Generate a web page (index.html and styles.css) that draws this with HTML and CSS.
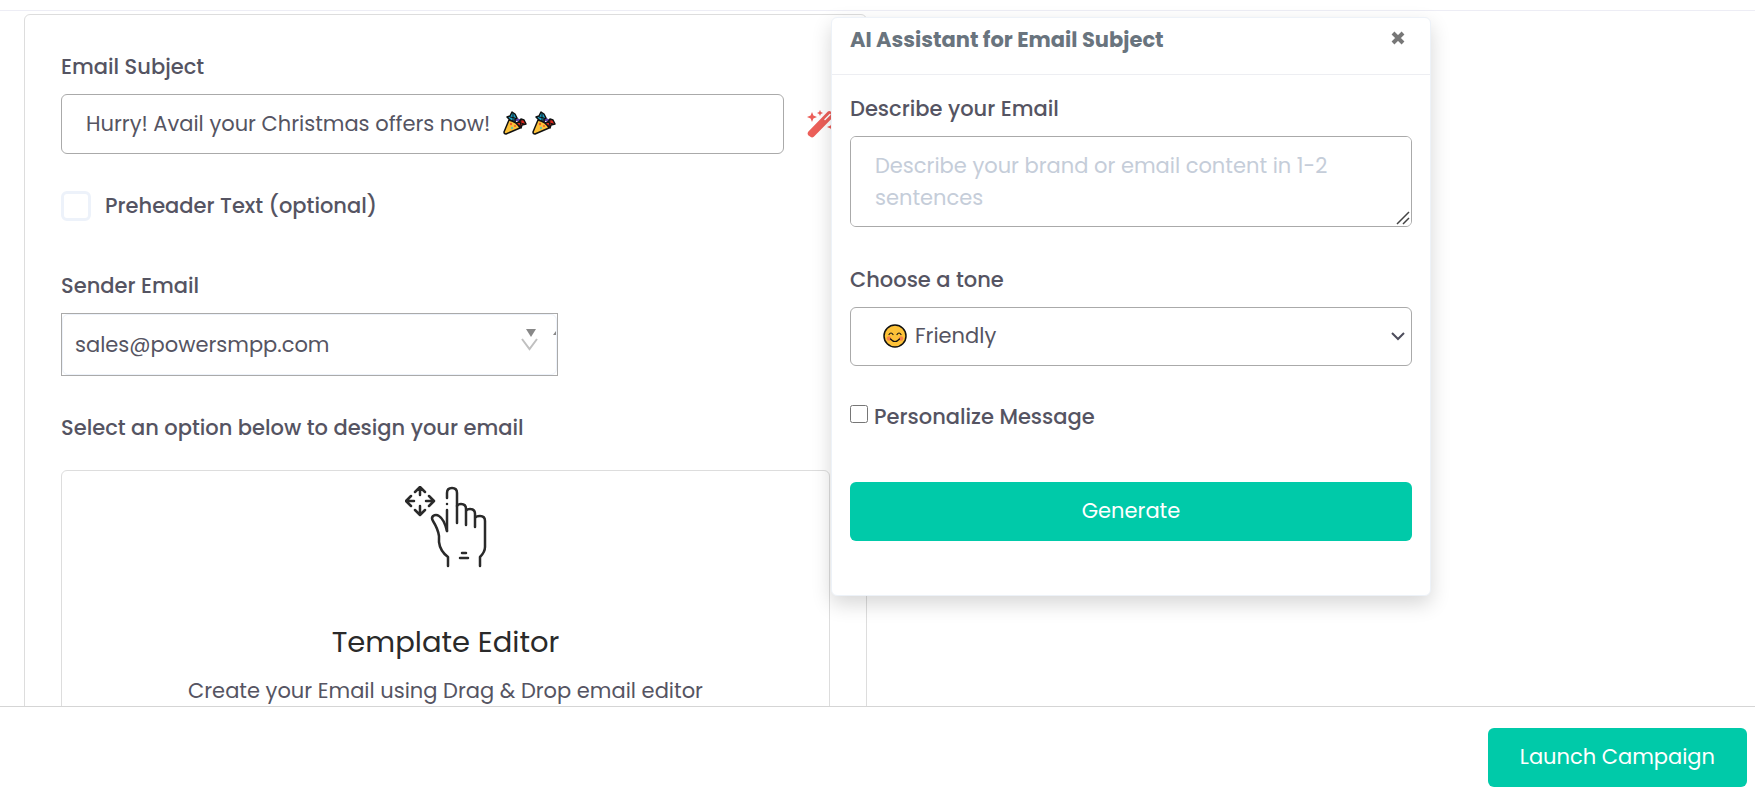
FILE: index.html
```html
<!DOCTYPE html>
<html lang="en">
<head>
  <meta charset="UTF-8">
  <meta name="viewport" content="width=device-width, initial-scale=1.0">
  <title>Email Campaign</title>
  <link rel="stylesheet" href="styles.css">
</head>
<body>
  <header class="topbar"></header>

  <main class="content">
    <form class="campaign" id="campaign-form">
      <label class="field-label" for="subject">Email Subject</label>
      <div class="subject-row">
        <div class="subject-box">
          <input class="control" type="text" id="subject" value="Hurry! Avail your Christmas offers now!">
          <span class="poppers">
            <svg class="popper" viewBox="0 0 24 24" aria-hidden="true">
              <path d="M11 11l2-3 4 2" fill="none" stroke="#5b3fa8" stroke-width="3"/>
              <path d="M4 6l3-1 2-4 3 2 2 4-2 1v3l-4-1z" fill="#1b9fc4" stroke="#111" stroke-width="1.500" stroke-linejoin="round"/>
              <path d="M10 2v8M7 6l5 1" stroke="#111"/>
              <path d="M13 12l3-1 2-3 3 1 2 4-4 1-1 3-2-2-3 1z" fill="#d8281c" stroke="#111" stroke-width="1.500" stroke-linejoin="round"/>
              <path d="M15 11l6 2M18 9l-1 7" stroke="#111"/>
              <path d="M6 9 1 21q0 2 2 2L17 17q-3-6-11-8z" fill="#fdc239" stroke="#111" stroke-width="1.500" stroke-linejoin="round"/>
              <circle cx="8" cy="13" r="1.200" fill="#ee5a2c"/>
              <circle cx="9" cy="17" r="1.200" fill="#6fc3a0"/>
              <circle cx="12" cy="15" r="1" fill="#ee5a2c"/>
            </svg>
            <svg class="popper" viewBox="0 0 24 24" aria-hidden="true">
              <path d="M11 11l2-3 4 2" fill="none" stroke="#5b3fa8" stroke-width="3"/>
              <path d="M4 6l3-1 2-4 3 2 2 4-2 1v3l-4-1z" fill="#1b9fc4" stroke="#111" stroke-width="1.500" stroke-linejoin="round"/>
              <path d="M10 2v8M7 6l5 1" stroke="#111"/>
              <path d="M13 12l3-1 2-3 3 1 2 4-4 1-1 3-2-2-3 1z" fill="#d8281c" stroke="#111" stroke-width="1.500" stroke-linejoin="round"/>
              <path d="M15 11l6 2M18 9l-1 7" stroke="#111"/>
              <path d="M6 9 1 21q0 2 2 2L17 17q-3-6-11-8z" fill="#fdc239" stroke="#111" stroke-width="1.500" stroke-linejoin="round"/>
              <circle cx="8" cy="13" r="1.200" fill="#ee5a2c"/>
              <circle cx="9" cy="17" r="1.200" fill="#6fc3a0"/>
              <circle cx="12" cy="15" r="1" fill="#ee5a2c"/>
            </svg>
          </span>
        </div>
        <button class="wand-button" type="button" aria-label="AI Assistant">
          <svg width="30" height="28" viewBox="0 0 30 28" fill="#ec5f59">
            <path d="M1.200 21.800 20.600 1.800q1.600-1.600 3.400 0l2 2q1.600 1.600 0 3.400L6.800 26.800q-1.800 1.400-3.400 0L1.200 25.200q-1.200-1.600 0-3.400z"/>
            <path d="M18 9.500l5-5" stroke="#fff" stroke-width="1.500" stroke-linecap="round"/>
            <path d="M5 2l1.400 3.600L10 7 6.400 8.400 5 12 3.600 8.400 0 7l3.600-1.400z"/>
            <path d="M13 0l.9 2.100L16 3l-2.100.9L13 6l-.9-2.100L10 3l2.100-.9z"/>
            <path d="M25 12l1.400 3.600L30 17l-3.600 1.400L25 22l-1.400-3.600L20 17l3.600-1.400z"/>
          </svg>
        </button>
      </div>

      <div class="preheader">
        <input class="big-check" type="checkbox" id="preheader">
        <label for="preheader">Preheader Text (optional)</label>
      </div>

      <label class="field-label" for="sender">Sender Email</label>
      <div class="sender-box">
        <select class="sender" id="sender">
          <option>sales@powersmpp.com</option>
        </select>
        <svg class="sender-arrows" width="36" height="24" viewBox="0 0 36 24" aria-hidden="true">
          <path d="M5 2h10l-5 8z" fill="#888"/>
          <path d="M1 12l7.500 10L16 12" fill="none" stroke="#c0c0c0" stroke-width="2"/>
          <path d="M35 4v4h-3z" fill="#888"/>
        </svg>
      </div>

      <p class="field-label">Select an option below to design your email</p>
      <section class="editor-option">
        <svg width="82" height="82" viewBox="0 0 82 82" fill="none" stroke="#2a2a2a" stroke-width="2.500" stroke-linecap="round" stroke-linejoin="round" aria-hidden="true">
          <path d="M15 9V2M10 6l5-5 5 5M15 20v8M10 24l5 5 5-5M9 15H2M6 10l-5 5 5 5M21 15h7M24 10l5 5-5 5"/>
          <path d="M42 12V7q0-5 5-5t5 5v30M42 18v0M42 24v21"/>
          <path d="M52 20q1-2 4-2 5 0 5 5v16M61 25q1-2 4-2 5 0 5 5v13M70 32q1-2 5-2 5 0 5 5v26q0 5-5 10v9"/>
          <path d="M42 45q-3-12-8-15-3-2-6 0-2 2 0 5 5 8 6 15v6q1 9 9 15v9"/>
          <path d="M57 67h4M55 72h8"/>
        </svg>
        <h2>Template Editor</h2>
        <p>Create your Email using Drag &amp; Drop email editor</p>
      </section>
    </form>

    <section class="assistant" role="dialog" aria-labelledby="assistant-title">
      <div class="assistant-header">
        <h3 id="assistant-title">AI Assistant for Email Subject</h3>
        <button class="close" type="button" aria-label="Close">
          <svg width="14" height="14" viewBox="0 0 14 14" stroke="#777" stroke-width="4"><path d="M2 2l10 10M12 2L2 12"/></svg>
        </button>
      </div>
      <form class="assistant-body">
        <label class="field-label" for="describe">Describe your Email</label>
        <div class="describe-box">
          <textarea class="control describe" id="describe" placeholder="Describe your brand or email content in 1-2 sentences"></textarea>
          <svg class="grip" width="14" height="14" viewBox="0 0 14 14" stroke="#444" stroke-width="1.500" aria-hidden="true"><path d="M1 13L13 1M7 13l6-6"/></svg>
        </div>

        <label class="field-label" for="tone">Choose a tone</label>
        <div class="tone-box">
          <select class="control tone" id="tone">
            <option>Friendly</option>
          </select>
          <svg class="smile" width="24" height="24" viewBox="0 0 24 24" fill="none" aria-hidden="true">
            <circle cx="12" cy="12" r="11" fill="#fdc239" stroke="#111" stroke-width="1.500"/>
            <circle cx="6" cy="14.500" r="2.200" fill="#f5814b"/>
            <circle cx="18" cy="14.500" r="2.200" fill="#f5814b"/>
            <path d="M6 10.500q2-3 4 0M14 10.500q2-3 4 0M7.500 15q4.500 5 9 0" stroke="#111" stroke-width="1.200" stroke-linecap="round"/>
          </svg>
          <svg class="chevron" width="14" height="9" viewBox="0 0 14 9" fill="none" stroke="#4d4d5c" stroke-width="2" aria-hidden="true"><path d="M1 1l6 6 6-6"/></svg>
        </div>

        <div class="personalize">
          <input type="checkbox" id="personalize">
          <label for="personalize">Personalize Message</label>
        </div>
        <button class="primary generate" type="button">Generate</button>
      </form>
    </section>
  </main>

  <footer class="footer">
    <button class="primary launch" type="submit" form="campaign-form">Launch Campaign</button>
  </footer>
</body>
</html>
```
FILE: styles.css
```css
* {
  box-sizing: border-box;
}

body {
  margin: 0;
  height: 100vh;
  display: flex;
  flex-direction: column;
  overflow: hidden;
  background-color: #fff;
  color: #555462;
  font-family: Poppins, Inter, sans-serif;
  font-size: 21px;
  line-height: 24px;
}

h2, h3, p {
  margin: 0;
}

input, select, textarea, button {
  font: inherit;
  color: inherit;
  margin: 0;
}

.topbar {
  flex: none;
  height: 11px;
  border-bottom: 1px solid #ededf5;
}

.content {
  position: relative;
  flex: 1;
  min-height: 0;
  padding: 3px 24px 0;
}

/* Campaign form */
.campaign {
  width: 843px;
  max-width: 100%;
  padding: 40px 36px;
  border: 1px solid #ddd;
  border-radius: 6px;
}

.field-label {
  display: block;
  margin-bottom: 15px;
  font-weight: 500;
}

.control {
  display: block;
  width: 100%;
  height: 60px;
  padding: 0 24px 2px;
  border: 1px solid #aaa;
  border-radius: 6px;
  background-color: #fff;
}

.subject-row {
  display: flex;
  align-items: center;
  gap: 23px;
  margin-bottom: 37px;
}

.subject-box {
  position: relative;
  flex: 1;
}

.poppers {
  position: absolute;
  top: 17px;
  left: 442px;
  display: flex;
  gap: 5px;
}

.popper {
  width: 24px;
  height: 24px;
}

.wand-button {
  display: flex;
  width: 23px;
  padding: 0;
  border: 0;
  background: none;
  cursor: pointer;
}

.wand-button svg {
  flex: none;
}

.preheader {
  display: flex;
  align-items: center;
  gap: 14px;
  margin-bottom: 53px;
  font-weight: 500;
}

.big-check {
  appearance: none;
  width: 30px;
  height: 30px;
  border: 3px solid #edf2fa;
  border-radius: 6px;
}

.sender-box {
  position: relative;
  width: 497px;
  margin-bottom: 40px;
  border: 1px solid #aaa;
}

.sender {
  appearance: none;
  display: block;
  width: 100%;
  height: 61px;
  padding: 0 12px;
  border: 1px solid #edf2fa;
  border-radius: 6px;
  background-color: #fff;
}

.sender-arrows {
  position: absolute;
  top: 13px;
  right: 0;
}

.editor-option {
  display: flex;
  flex-direction: column;
  align-items: center;
  margin-top: 30px;
  padding: 15px 20px 40px;
  border: 1px solid #ddd;
  border-radius: 6px;
}

.editor-option h2 {
  margin: 56px 0 19px;
  color: #2a2a2a;
  font-size: 29px;
  font-weight: 400;
  line-height: 36px;
}

/* AI assistant popup */
.assistant {
  position: absolute;
  top: 6px;
  left: 831px;
  width: 600px;
  border: 1px solid #edf2f8;
  border-radius: 6px;
  background-color: #fff;
  box-shadow: 0 8px 20px rgba(0, 0, 0, 0.16);
}

.assistant-header {
  display: flex;
  justify-content: space-between;
  padding: 10px 25px 22px 18px;
  border-bottom: 1px solid #edeef2;
}

.assistant-header h3 {
  color: #69747e;
  font-size: 21px;
  font-weight: 700;
}

.close {
  display: flex;
  align-items: center;
  height: 20px;
  padding: 0;
  border: 0;
  background: none;
  cursor: pointer;
}

.assistant-body {
  padding: 22px 18px 54px;
}

.describe-box {
  position: relative;
  margin-bottom: 41px;
}

.describe {
  height: 91px;
  padding: 13px 24px;
  line-height: 32px;
  resize: none;
}

.describe::placeholder {
  color: #c5cdd9;
}

.grip {
  position: absolute;
  right: 2px;
  bottom: 2px;
}

.tone-box {
  position: relative;
  margin-bottom: 39px;
}

.tone {
  appearance: none;
  height: 59px;
  padding-left: 64px;
}

.smile {
  position: absolute;
  top: 17px;
  left: 33px;
}

.chevron {
  position: absolute;
  top: 25px;
  right: 7px;
}

.personalize {
  display: flex;
  gap: 6px;
  margin-bottom: 53px;
  font-weight: 500;
}

.personalize input {
  width: 18px;
  height: 18px;
}

.primary {
  height: 59px;
  padding: 0 32px 1px;
  border: 0;
  border-radius: 6px;
  background-color: #00caa9;
  color: #fff;
  cursor: pointer;
}

.primary:hover {
  background-color: #00b497;
}

.generate {
  width: 100%;
}

/* Bottom bar */
.footer {
  position: relative;
  display: flex;
  flex: none;
  justify-content: flex-end;
  padding: 21px 8px 4px;
  border-top: 1px solid #d5d5d5;
  background-color: #fff;
}
```
